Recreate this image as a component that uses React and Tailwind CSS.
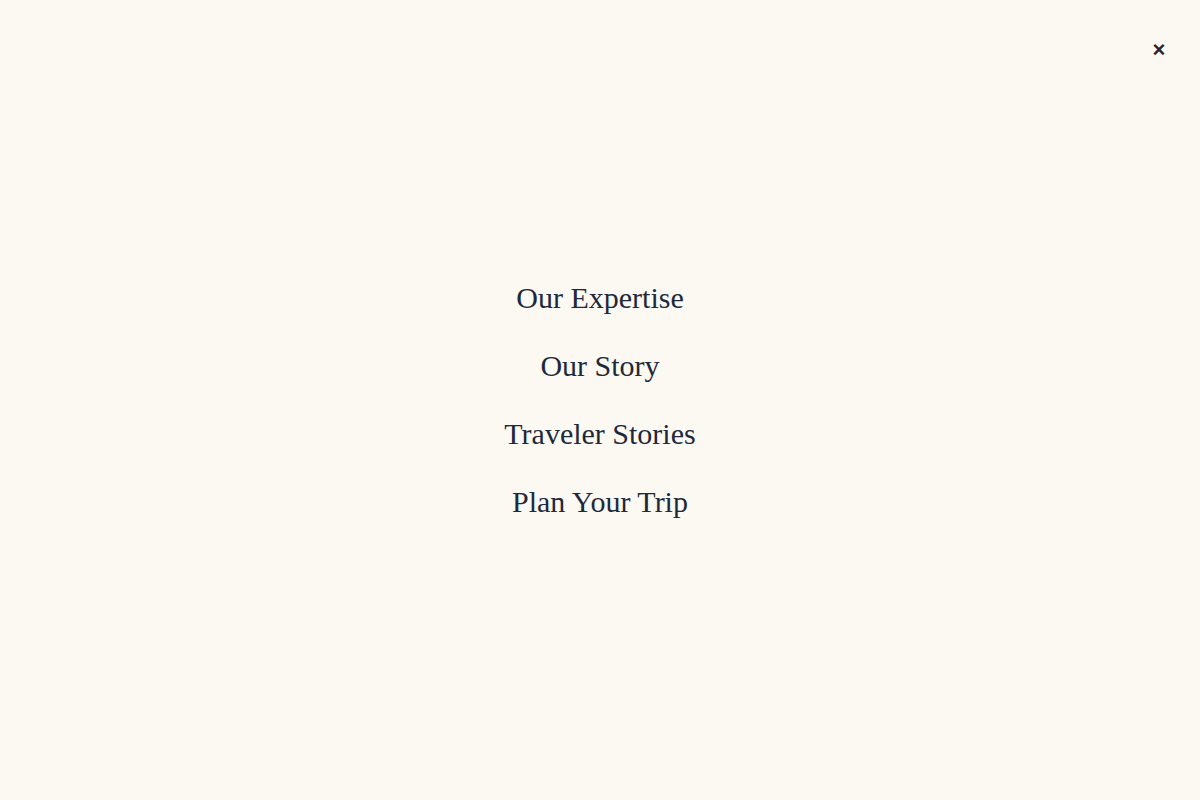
import React from 'react';

const links = ['Our Expertise', 'Our Story', 'Traveler Stories', 'Plan Your Trip'];

export default function App() {
    return (
        <div className="relative w-full h-screen bg-[#fcf9f2] text-[#1e293b] flex items-center justify-center">
            {/* Close */}
            <button
                className="absolute top-[35px] right-[30px] w-[22px] h-[30px] flex items-center justify-center text-[22px] font-bold leading-none"
                style={{ fontFamily: '"Liberation Sans", Arial, sans-serif' }}
                aria-label="Close menu"
            >
                ×
            </button>

            {/* Menu */}
            <nav
                className="flex flex-col items-center gap-8"
                style={{ fontFamily: '"Liberation Serif", "Times New Roman", serif' }}
            >
                {links.map((l) => (
                    <a key={l} href="#" className="text-3xl leading-9">
                        {l}
                    </a>
                ))}
            </nav>
        </div>
    );
}
